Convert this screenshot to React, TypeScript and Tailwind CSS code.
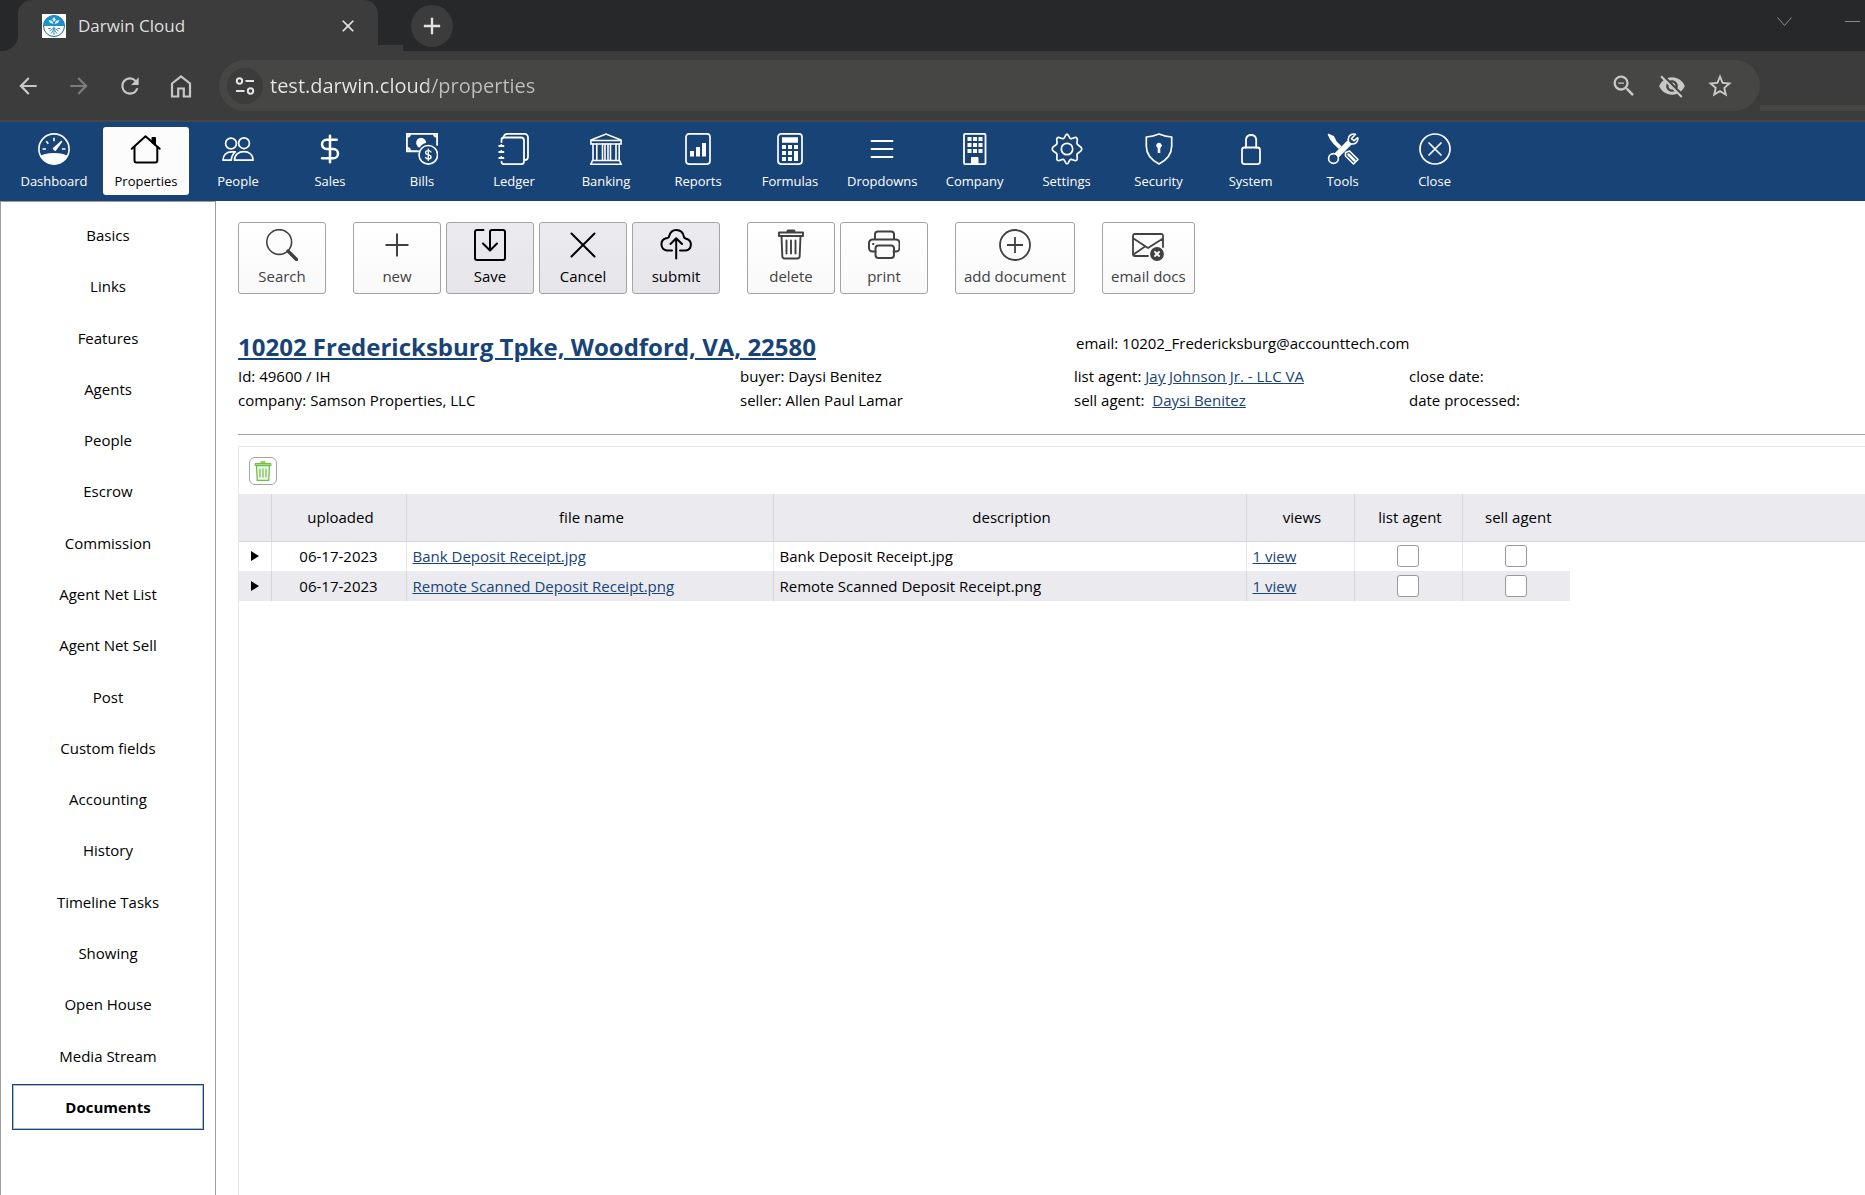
import { useState } from "react";
import type { ReactNode } from "react";
import { DollarSign } from "lucide-react";
import {
  MdAdd,
  MdArrowBack,
  MdArrowForward,
  MdClose,
  MdRefresh,
  MdStarBorder,
  MdVisibilityOff,
  MdZoomOut,
} from "react-icons/md";

type Doc = {
  id: number;
  uploaded: string;
  fileName: string;
  views: number;
};

const documents: Doc[] = [
  { id: 1, uploaded: "06-17-2023", fileName: "Bank Deposit Receipt.jpg", views: 1 },
  { id: 2, uploaded: "06-17-2023", fileName: "Remote Scanned Deposit Receipt.png", views: 1 },
];

const sections = [
  "Basics",
  "Links",
  "Features",
  "Agents",
  "People",
  "Escrow",
  "Commission",
  "Agent Net List",
  "Agent Net Sell",
  "Post",
  "Custom fields",
  "Accounting",
  "History",
  "Timeline Tasks",
  "Showing",
  "Open House",
  "Media Stream",
  "Documents",
];

// all line icons share the same 32px box
function Icon({ children, width = 2 }: { children: ReactNode; width?: number }) {
  return (
    <svg
      viewBox="0 0 32 32"
      className="size-8 shrink-0"
      fill="none"
      stroke="currentColor"
      strokeWidth={width}
      strokeLinecap="round"
      strokeLinejoin="round"
      aria-hidden="true"
    >
      {children}
    </svg>
  );
}

const mainMenu: { label: string; icon: ReactNode }[] = [
  {
    label: "Dashboard",
    icon: (
      <Icon width={1.6}>
        <circle cx="16" cy="16" r="15.1" />
        <path d="M3 23c6-3.300 20-3.300 26 0c-5 10.500-21 10.500-26 0z" fill="currentColor" strokeWidth="1" />
        <path d="M4.500 16h3.500M24 16h3.500M16 4.800v3.400M8.300 8.300l2 2.500" strokeLinecap="butt" />
        <path d="M23.500 8.500l-6.300 8.700-1.700-1.500z" fill="currentColor" />
      </Icon>
    ),
  },
  {
    label: "Properties",
    icon: (
      <Icon>
        <path d="M1.800 15.800L15.500 3.200l14.200 12.600" />
        <path d="M4.500 14v13.500a2 2 0 0 0 2 2h18.800a2 2 0 0 0 2-2V14" />
        <path d="M22.500 5h2.500v6.500l-2.500-2z" fill="currentColor" />
      </Icon>
    ),
  },
  {
    label: "People",
    icon: (
      <Icon width={1.700}>
        <circle cx="9" cy="10.500" r="5.400" />
        <circle cx="22" cy="10.200" r="5.400" />
        <path d="M12.500 27.200h18.500c0-5.600-4-8.600-9.200-8.600s-9.300 3-9.300 8.600z" />
        <path d="M9.300 27.200H1c0-5.200 3.500-8.400 8.700-8.400h3.600c-2.300 1.800-3.800 4.500-4 8.400z" />
      </Icon>
    ),
  },
  { label: "Sales", icon: <DollarSign className="size-8" strokeWidth={1.900} aria-hidden="true" /> },
  {
    label: "Bills",
    icon: (
      <Icon width={1.500}>
        <path d="M12 18.200H.8V.8h30.400v11M28 .8c0 1.800 1.200 3 3.200 3M.8 3.800c2 0 3.200-1.200 3.200-3M.8 15c2 0 3.200 1.200 3.200 3.200" strokeWidth="2" />
        <path d="M12 12.800a4.300 4.300 0 1 1 7.400-3.600c-2.800 1-5 2.300-6 4.600z" fill="currentColor" />
        <circle cx="22.300" cy="21.800" r="9.300" strokeWidth="1.600" />
        <path d="M25 19c-.6-1-1.500-1.300-2.700-1.300-1.600 0-2.700.8-2.700 2 0 2.900 5.500 1.300 5.500 4.200 0 1.300-1.200 2-2.800 2-1.400 0-2.300-.5-2.800-1.500M22.300 16.200v11.200" strokeWidth="1.300" />
      </Icon>
    ),
  },
  {
    label: "Ledger",
    icon: (
      <Icon width={1.800}>
        <path d="M3.500 9V7a2.500 2.500 0 0 1 2.500-2.500h17a3 3 0 0 1 3 3v21a2.700 2.700 0 0 1-2.700 2.700H6a2.500 2.500 0 0 1-2.500-2.500" />
        <path d="M5.500 4.500C6 2 7.500 .9 9.500 .9h17A3.500 3.500 0 0 1 30 4.400v19c0 2.300-1 3.600-3.500 3.600" />
        <path d="M1.200 13h4.300M1.200 19h4.300M1.200 25h4.300M3.300 12v1M3.300 18v1M3.300 24v1" />
      </Icon>
    ),
  },
  {
    label: "Banking",
    icon: (
      <Icon width={1.600}>
        <path d="M1 7L16 1l15 6M.9 7.500h30.200v3.500H.9zM2.500 27.500h27l1.600 3.700H.9z" strokeLinejoin="miter" />
        <path d="M3 11v16M6.800 11v16M12.500 11v16M15 11v16M18 11v16M20.500 11v16M26 11v16M29.200 11v16" />
      </Icon>
    ),
  },
  {
    label: "Reports",
    icon: (
      <Icon width={1.700}>
        <rect x="4" y=".9" width="24" height="30.200" rx="3" />
        <path d="M10 18v5.500M16 14v9.500M22 10v13.500" strokeWidth="4" strokeLinecap="butt" />
      </Icon>
    ),
  },
  {
    label: "Formulas",
    icon: (
      <Icon width={1.700}>
        <rect x="4" y=".9" width="24" height="30.200" rx="3" />
        <path d="M8 7h16" strokeWidth="5.500" strokeLinecap="butt" />
        <path d="M8 14h4M14 14h4M20 14h4M8 20h4M14 20h4M8 26h4M14 26h4" strokeWidth="4" strokeLinecap="butt" />
        <path d="M22 18v10" strokeWidth="4" strokeLinecap="butt" />
      </Icon>
    ),
  },
  {
    label: "Dropdowns",
    icon: (
      <Icon width={1.800}>
        <path d="M5.500 8h21M5.500 16h21M5.500 24h21" />
      </Icon>
    ),
  },
  {
    label: "Company",
    icon: (
      <Icon width={1.800}>
        <rect x="5" y=".9" width="21.500" height="30.200" rx="1" />
        <path d="M8.500 6h4M14 6h4M19.500 6h4M8.500 12h4M14 12h4M19.500 12h4M8.500 18h4M14 18h4M19.500 18h4" strokeWidth="4" strokeLinecap="butt" />
        <path d="M12.500 31v-6.500h6.500V31z" fill="currentColor" strokeWidth="1" />
      </Icon>
    ),
  },
  {
    label: "Settings",
    icon: (
      <Icon width={1.700}>
        <circle cx="16" cy="16" r="5.700" />
        <path d="M16 1.200C18 1.200 17.600 5 19.700 5.600S23.500 3.400 25.600 4.700C27.700 6.300 25 8.800 26.200 11S30.800 13 30.800 16 27.300 18.900 26.200 21 27.600 25.600 25.600 27.300C23.500 28.600 21.800 25.800 19.700 26.400S18 30.800 16 30.800 14.400 27 12.300 26.400 8.500 28.600 6.400 27.300C4.400 25.600 7 23.200 5.800 21S1.200 19 1.200 16 4.700 13.100 5.800 11 4.400 6.400 6.400 4.700C8.500 3.400 10.200 6.200 12.300 5.600S14 1.200 16 1.200z" />
      </Icon>
    ),
  },
  {
    label: "Security",
    icon: (
      <Icon width={1.700}>
        <path d="M16 1C12.500 2.500 8 3.700 3.300 4v9c0 7.500 4.700 13.800 12.700 18 8-4.200 12.700-10.500 12.700-18V4C24 3.700 19.500 2.500 16 1z" />
        <circle cx="16" cy="12.500" r="2.300" fill="currentColor" strokeWidth="1" />
        <path d="M16 14v6" strokeWidth="2.600" strokeLinecap="butt" />
      </Icon>
    ),
  },
  {
    label: "System",
    icon: (
      <Icon width={1.800}>
        <rect x="7" y="14.500" width="18" height="16.600" rx="2.500" />
        <path d="M11 14.500V6.200a5.200 5.200 0 0 1 10.200 0v8.300" />
      </Icon>
    ),
  },
  {
    label: "Tools",
    icon: (
      <Icon width={1.600}>
        <path d="M1.500 1.500l4.800 2.200 2.600 5 4.600 4.600-1.700 1.700-4.600-4.600L3.700 6z" fill="currentColor" />
        <path d="M9.500 22.500L22.500 9.500" strokeWidth="6" strokeLinecap="butt" />
        <circle cx="6.500" cy="25.500" r="4.900" />
        <path d="M28.500 1.300c-3.500-1-7.500 1.200-7.300 5.200l.5 3 2.500 1.500c4 .5 7.300-2 6.500-6.300l-3.700 3-2.600-2z" />
        <path d="M18.500 19.500l4-1.500 8.500 8.500-4.500 4.500-8-8z" />
        <path d="M21.500 21.500l6 6" strokeWidth="2.500" />
      </Icon>
    ),
  },
  {
    label: "Close",
    icon: (
      <Icon width={1.700}>
        <circle cx="16" cy="16" r="15" />
        <path d="M10 10l12 12M22 10L10 22" />
      </Icon>
    ),
  },
];

type Action = { label: string; icon: ReactNode; highlighted?: boolean };

const actionGroups: Action[][] = [
  [
    {
      label: "Search",
      icon: (
        <Icon width={1.600}>
          <circle cx="13.200" cy="13" r="12.400" />
          <path d="M22 22l8.500 8.500" strokeWidth="3.400" />
        </Icon>
      ),
    },
  ],
  [
    {
      label: "new",
      icon: (
        <Icon>
          <path d="M4.500 16h23M16 4.500v23" strokeLinecap="butt" />
        </Icon>
      ),
    },
    {
      label: "Save",
      highlighted: true,
      icon: (
        <Icon>
          <path d="M9.500 1H3a2 2 0 0 0-2 2v26a2 2 0 0 0 2 2h26a2 2 0 0 0 2-2V3a2 2 0 0 0-2-2H18a2 2 0 0 0-2 2v18M9 14.500l7 7 7-7" />
        </Icon>
      ),
    },
    {
      label: "Cancel",
      highlighted: true,
      icon: (
        <Icon>
          <path d="M4.500 4.500l23 23M27.500 4.500l-23 23" />
        </Icon>
      ),
    },
    {
      label: "submit",
      highlighted: true,
      icon: (
        <Icon>
          <path d="M12 21.500H7a6.300 6.300 0 0 1-1-12.300C7.500 9 9 9 9 7.500 10 3.500 12.800 1 16.300 1c4.200 0 7 3 7.700 7 .2 1.500 1.500 1.500 3 2a6 6 0 0 1-1 11.500h-6M16.200 29.500V9.500M10.500 15l5.700-5.700L22 15" />
        </Icon>
      ),
    },
  ],
  [
    {
      label: "delete",
      icon: (
        <Icon>
          <path d="M4 3.500h24v3.500H4zM6.500 7l.8 20a2.500 2.500 0 0 0 2.500 2.500h12.400a2.500 2.500 0 0 0 2.500-2.500l.8-20M11.500 11.500v13M16 11.500v13M20.500 11.500v13" strokeWidth="1.900" />
          <path d="M13 2h6" strokeWidth="3" />
        </Icon>
      ),
    },
    {
      label: "print",
      icon: (
        <Icon>
          <path d="M7 10.500V5.500a3 3 0 0 1 3-3h13a3 3 0 0 1 3 3v5M7.500 22.500H4.500A3.500 3.500 0 0 1 1 19v-5a3.500 3.500 0 0 1 3.500-3.500h23.500a3.500 3.500 0 0 1 3.500 3.500v5a3.500 3.500 0 0 1-3.500 3.500h-2.500" />
          <rect x="7.500" y="16.500" width="18.500" height="12.500" rx="3" />
          <path d="M5 15h.5" />
        </Icon>
      ),
    },
  ],
  [
    {
      label: "add document",
      icon: (
        <Icon width={1.800}>
          <circle cx="16" cy="16" r="15" />
          <path d="M8 16h16M16 8v16" strokeLinecap="butt" />
        </Icon>
      ),
    },
  ],
  [
    {
      label: "email docs",
      icon: (
        <Icon width={1.800}>
          <path d="M16 27H2.500A1.600 1.600 0 0 1 1 25.400V6.500A1.600 1.600 0 0 1 2.500 5h27A1.600 1.600 0 0 1 31 6.500V18M1.500 9.500L16 19 31 9.500M1.500 25.500L13 17.500" />
          <circle cx="25" cy="25" r="6" fill="currentColor" />
          <path d="M23 23l4 4M27 23l-4 4" className="stroke-white" />
        </Icon>
      ),
    },
  ],
];

function Favicon() {
  return (
    <svg viewBox="0 0 24 24" className="size-6 shrink-0" aria-hidden="true">
      <rect width="24" height="24" fill="#fff" />
      <circle cx="12" cy="12" r="10.500" fill="#fff" stroke="#1c6b93" strokeWidth="1" />
      <path d="M1.500 12a10.500 10.500 0 0 1 21 0z" fill="#1d8fcb" />
      <path d="M12 11V7M12 3l1.800 2.500L12 8l-1.800-2.500zM6.500 6l3.500.7 1.500 3.300-3.500-1zM17.500 6L14 6.700 12.500 10l3.500-1z" fill="#dff1fa" />
      <path d="M12 12.500V21M12 14l-4.500 3M12 14l4.500 3M12 15.500l-3 4M12 15.500l3 4M8.500 14.500l-2.500 0M15.500 14.500h2.500" stroke="#3a8db8" fill="none" />
    </svg>
  );
}

function BrowserChrome() {
  const [url, setUrl] = useState("test.darwin.cloud/properties");

  return (
    <div className="bg-[#3c3c3c]">
      {/* tab strip */}
      <div className="flex h-[51px] items-stretch bg-[#27282a]">
        <div className="w-[18px] bg-[#3c3c3c]">
          <div className="h-full rounded-br-[16px] bg-[#27282a]" />
        </div>
        <div className="flex w-[360px] items-center gap-3 rounded-t-[14px] bg-[#3c3c3c] pr-5 pl-6">
          <Favicon />
          <span className="flex-1 text-[17px] text-[#dfdfdf]">Darwin Cloud</span>
          <button type="button" aria-label="Close tab" className="text-[#e3e3e3]">
            <MdClose className="size-5" />
          </button>
        </div>
        <div className="h-[6px] w-[25px] self-end bg-[#3c3c3c]" />
        <button
          type="button"
          aria-label="New tab"
          className="ml-2 flex size-[42px] items-center justify-center self-center rounded-full bg-[#3c3c3c] text-[#e3e3e3]"
        >
          <MdAdd className="size-7" />
        </button>
        <div className="ml-auto flex items-center gap-[53px] pr-[5px] pb-[8px] text-[#8a8a8a]">
          <svg viewBox="0 0 15 10" className="h-[10px] w-[15px]" fill="none" stroke="currentColor" aria-hidden="true">
            <path d="M.5.5l7 8 7-8" />
          </svg>
          <svg viewBox="0 0 15 2" className="h-[2px] w-[15px]" fill="currentColor" aria-hidden="true">
            <path d="M0 0h15v1H0z" />
          </svg>
        </div>
      </div>

      {/* address row */}
      <div className="flex h-[71px] items-center border-b-2 border-[#464646] pl-[15px]">
        <div className="flex items-center gap-[25px] text-[#c7c7c7]">
          <button type="button" aria-label="Back">
            <MdArrowBack className="size-[26px]" />
          </button>
          <button type="button" aria-label="Forward" className="text-[#7c7c7c]">
            <MdArrowForward className="size-[26px]" />
          </button>
          <button type="button" aria-label="Reload">
            <MdRefresh className="size-[26px]" />
          </button>
          <button type="button" aria-label="Home">
            <svg viewBox="0 0 26 26" className="size-[26px]" fill="none" stroke="currentColor" strokeWidth="2.200" aria-hidden="true">
              <path d="M4 10.500L13 3.500l9 7V23.500h-6.200v-8h-5.600v8H4z" />
            </svg>
          </button>
        </div>
        <div className="ml-[25px] flex h-[51px] flex-1 items-center rounded-full bg-[#464644] pr-[26px] pl-[8px]">
          <button
            type="button"
            aria-label="Site information"
            className="flex size-9 items-center justify-center rounded-full bg-[#3c3c3c] text-[#e3e3e3]"
          >
            <svg viewBox="0 0 20 18" className="h-[18px] w-5" fill="none" stroke="currentColor" strokeWidth="2" aria-hidden="true">
              <circle cx="4.500" cy="4" r="2.700" />
              <path d="M10.500 4H19M1 14h8.500" />
              <circle cx="15.500" cy="14" r="2.700" />
            </svg>
          </button>
          <input
            aria-label="Address"
            value={url}
            onChange={(e) => setUrl(e.target.value)}
            className="ml-[7px] min-w-0 flex-1 bg-linear-to-r from-[#e8e8e8] from-[158px] to-[#bfbfbf] to-[158px] bg-clip-text text-xl text-transparent outline-none"
          />
          <div className="flex items-center gap-5 text-[#c9c9c9]">
            <button type="button" aria-label="Zoom">
              <MdZoomOut className="size-7" />
            </button>
            <button type="button" aria-label="Tracking protection">
              <MdVisibilityOff className="size-7" />
            </button>
            <button type="button" aria-label="Bookmark">
              <MdStarBorder className="size-7" />
            </button>
          </div>
        </div>
        <div className="mb-[9px] h-[6px] w-[105px] self-end bg-[#464644]" />
      </div>
    </div>
  );
}

function MainMenu() {
  return (
    <nav className="flex h-[79px] items-start gap-[6px] bg-[#184377] pt-[5px] pl-[11px]">
      {mainMenu.map(({ label, icon }) => (
        <a
          key={label}
          href="#"
          className={
            label === "Properties"
              ? "flex h-[68px] min-w-[86px] flex-col items-center gap-[6px] rounded-[3px] bg-[#fcfcfc] px-2 pt-[6px] text-[13px] leading-5 text-black"
              : "flex h-[68px] min-w-[86px] flex-col items-center gap-[6px] px-2 pt-[6px] text-[13px] leading-5 text-white"
          }
        >
          {icon}
          {label}
        </a>
      ))}
    </nav>
  );
}

function Sidebar() {
  return (
    <aside className="w-[216px] shrink-0 border border-b-0 border-[#9c9c9c] px-[11px] pt-[10px]">
      <ul className="flex h-[918px] flex-col justify-between">
        {sections.map((section) => (
          <li key={section}>
            <a
              href="#"
              className={
                section === "Documents"
                  ? "flex h-[46px] items-center justify-center border border-[#184377] text-[15px] font-bold inset-ring inset-ring-[#a9bcd3]"
                  : "flex h-[46px] items-center justify-center text-[15px]"
              }
            >
              {section}
            </a>
          </li>
        ))}
      </ul>
    </aside>
  );
}

function Toolbar() {
  return (
    <div className="flex gap-[27px]">
      {actionGroups.map((group, index) => (
        <div key={index} className="flex gap-[5px]">
          {group.map(({ label, icon, highlighted }) => (
            <button
              key={label}
              type="button"
              className={
                highlighted
                  ? "flex h-[72px] min-w-[88px] flex-col items-center gap-[3px] rounded-[3px] border border-[#a3a3a3] bg-linear-to-b from-[#ebebef] to-[#e5e5ea] px-2 pt-[6px] text-[15px] text-black"
                  : "flex h-[72px] min-w-[88px] flex-col items-center gap-[3px] rounded-[3px] border border-[#a3a3a3] bg-linear-to-b from-white to-[#f9f9f9] px-2 pt-[6px] text-[15px] text-[#414141]"
              }
            >
              {icon}
              {label}
            </button>
          ))}
        </div>
      ))}
    </div>
  );
}

function PropertySummary() {
  return (
    <section className="mt-9 border-b border-[#a3a3a3] pb-[22px]">
      <div className="flex items-center">
        <h1 className="w-[838px] text-2xl leading-[34px] font-bold text-[#184377]">
          <a href="#" className="underline">
            10202 Fredericksburg Tpke, Woodford, VA, 22580
          </a>
        </h1>
        <p className="pb-2">email: 10202_Fredericksburg@accounttech.com</p>
      </div>
      <div className="flex">
        <div className="w-[502px]">
          <p>Id: 49600 / IH</p>
          <p>company: Samson Properties, LLC</p>
        </div>
        <div className="w-[334px]">
          <p>buyer: Daysi Benitez</p>
          <p>seller: Allen Paul Lamar</p>
        </div>
        <div className="w-[335px]">
          <p>
            list agent:{" "}
            <a href="#" className="text-[#184377] underline">
              Jay Johnson Jr. - LLC VA
            </a>
          </p>
          <p>
            sell agent:{" "}
            <a href="#" className="ml-1 text-[#184377] underline">
              Daysi Benitez
            </a>
          </p>
        </div>
        <div>
          <p>close date:</p>
          <p>date processed:</p>
        </div>
      </div>
    </section>
  );
}

function AgentCheckbox({ label }: { label: string }) {
  return (
    <input
      type="checkbox"
      aria-label={label}
      className="mx-auto block size-[22px] appearance-none rounded-[3px] border border-[#9a9a9a] bg-white checked:bg-[#184377]"
    />
  );
}

function DocumentsPanel() {
  return (
    <section className="mt-[11px] flex-1 border-t border-l border-[#e8e8e8]">
      <div className="flex h-[47px] items-center pl-[10px]">
        <button
          type="button"
          aria-label="Delete selected"
          className="flex size-7 items-center justify-center rounded-md border border-[#a3a3a3] text-[#6cbf45]"
        >
          <svg viewBox="0 0 18 20" className="h-5 w-[18px]" fill="none" stroke="currentColor" aria-hidden="true">
            <path d="M2.500 4.500h13l-.8 15H3.300z" fill="#f0f9eb" strokeWidth="1.300" />
            <path d="M1 2.500h16v2H1z" fill="#a5da8a" strokeWidth="1" />
            <path d="M6.500 1h5" strokeWidth="1.500" />
            <path d="M6 7.500v9M9 7.500v9M12 7.500v9" strokeWidth="1.200" />
          </svg>
        </button>
      </div>
      <table className="w-full table-fixed border-collapse">
        <colgroup>
          <col className="w-[32px]" />
          <col className="w-[135px]" />
          <col className="w-[367px]" />
          <col className="w-[473px]" />
          <col className="w-[108px]" />
          <col className="w-[108px]" />
          <col className="w-[108px]" />
          <col />
        </colgroup>
        <thead>
          <tr className="h-[47px] border-b border-[#d6d6dc] bg-[#ebebef] [&>th]:border-[#d6d6dc] [&>th]:pl-1 [&>th]:font-normal">
            <th className="border-r" />
            <th className="border-r">uploaded</th>
            <th className="border-r">file name</th>
            <th className="border-r">description</th>
            <th className="border-r">views</th>
            <th className="border-r">list agent</th>
            <th>sell agent</th>
            <th />
          </tr>
        </thead>
        <tbody>
          {documents.map((doc) => (
            <tr
              key={doc.id}
              className="h-[30px] [&>td]:border-[#e8e8ec] even:[&>td]:border-[#d6d6dc] even:[&>td:not(:last-child)]:bg-[#ebebef]"
            >
              <td className="border-r">
                <button type="button" aria-label="Expand row" className="mx-auto block">
                  <svg viewBox="0 0 8 10" className="h-[10px] w-2" fill="currentColor" aria-hidden="true">
                    <path d="M0 0l8 5-8 5z" />
                  </svg>
                </button>
              </td>
              <td className="border-r text-center">{doc.uploaded}</td>
              <td className="border-r px-[6px]">
                <a href="#" className="text-[#184377] underline">
                  {doc.fileName}
                </a>
              </td>
              <td className="border-r px-[6px]">{doc.fileName}</td>
              <td className="border-r px-[6px]">
                <a href="#" className="text-[#184377] underline">
                  {doc.views} view
                </a>
              </td>
              <td className="border-r">
                <AgentCheckbox label={`list agent, ${doc.fileName}`} />
              </td>
              <td>
                <AgentCheckbox label={`sell agent, ${doc.fileName}`} />
              </td>
              <td />
            </tr>
          ))}
        </tbody>
      </table>
    </section>
  );
}

function App() {
  return (
    <div className="flex min-h-screen flex-col bg-white font-['Open_Sans','Noto_Sans',sans-serif] text-[15px] leading-6 text-black">
      <BrowserChrome />
      <MainMenu />
      <div className="flex flex-1">
        <Sidebar />
        <main className="flex min-w-0 flex-1 flex-col pt-[21px] pl-[22px]">
          <Toolbar />
          <PropertySummary />
          <DocumentsPanel />
        </main>
      </div>
    </div>
  );
}

export default App;
